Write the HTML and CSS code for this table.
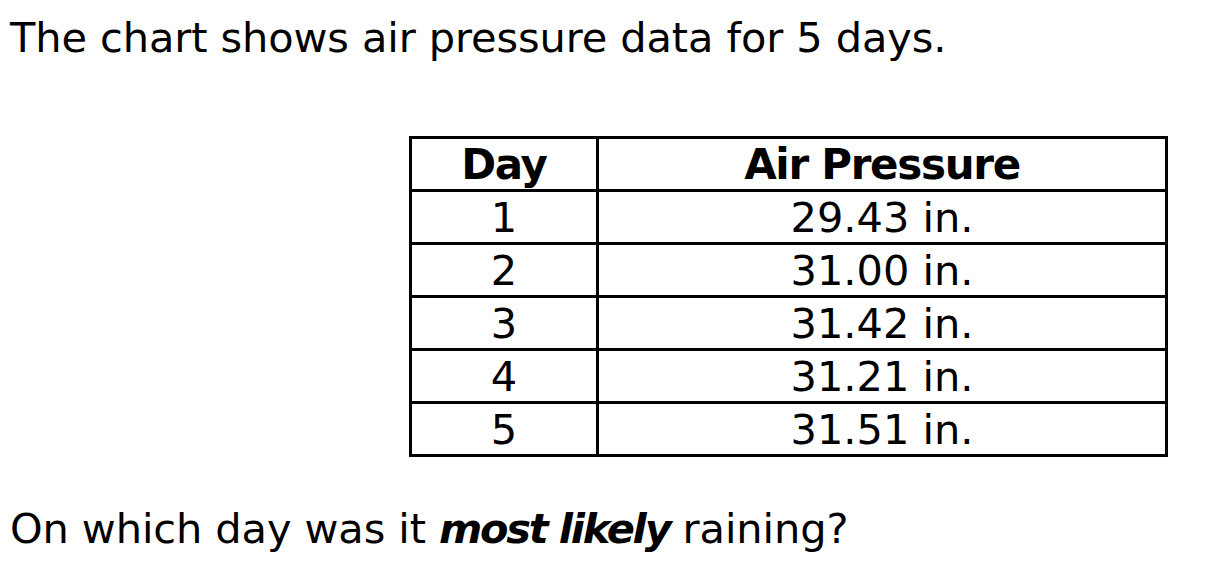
FILE: index.html
```html
<!DOCTYPE html>
<html>
<head>
<meta charset="utf-8">
<link rel="stylesheet" href="styles.css">
</head>
<body>
<p class="intro">The chart shows air pressure data for 5 days.</p>
<table class="data">
  <thead>
    <tr><th class="day">Day</th><th>Air Pressure</th></tr>
  </thead>
  <tbody>
    <tr><td>1</td><td>29.43 in.</td></tr>
    <tr><td>2</td><td>31.00 in.</td></tr>
    <tr><td>3</td><td>31.42 in.</td></tr>
    <tr><td>4</td><td>31.21 in.</td></tr>
    <tr><td>5</td><td>31.51 in.</td></tr>
  </tbody>
</table>
<p class="question">On which day was it <b class="emph">most likely</b> raining?</p>
</body>
</html>
```
FILE: styles.css
```css
html, body {
  margin: 0;
  padding: 0;
  background: #fff;
  color: #000;
  font-family: "DejaVu Sans", Verdana, sans-serif;
}
.intro {
  margin: 0;
  padding: 13px 0 0 10px;
  font-size: 41.5px;
  line-height: 50px;
  letter-spacing: -0.1px;
}
.data {
  margin: 73px 0 0 409px;
  border-collapse: collapse;
  width: 759px;
  font-size: 41.5px;
}
.data th, .data td {
  border: 3px solid #000;
  text-align: center;
  height: 48px;
  padding: 2px 0 0;
  line-height: 48px;
}
.data th {
  font-weight: bold;
  font-size: 42px;
  letter-spacing: -1.3px;
}
.data .day {
  width: 184px;
}
.question {
  margin: 47px 0 0 10px;
  font-size: 41.5px;
  line-height: 50px;
  letter-spacing: -0.1px;
}
.emph {
  font-weight: bold;
  font-style: italic;
  letter-spacing: -2.2px;
}
```
